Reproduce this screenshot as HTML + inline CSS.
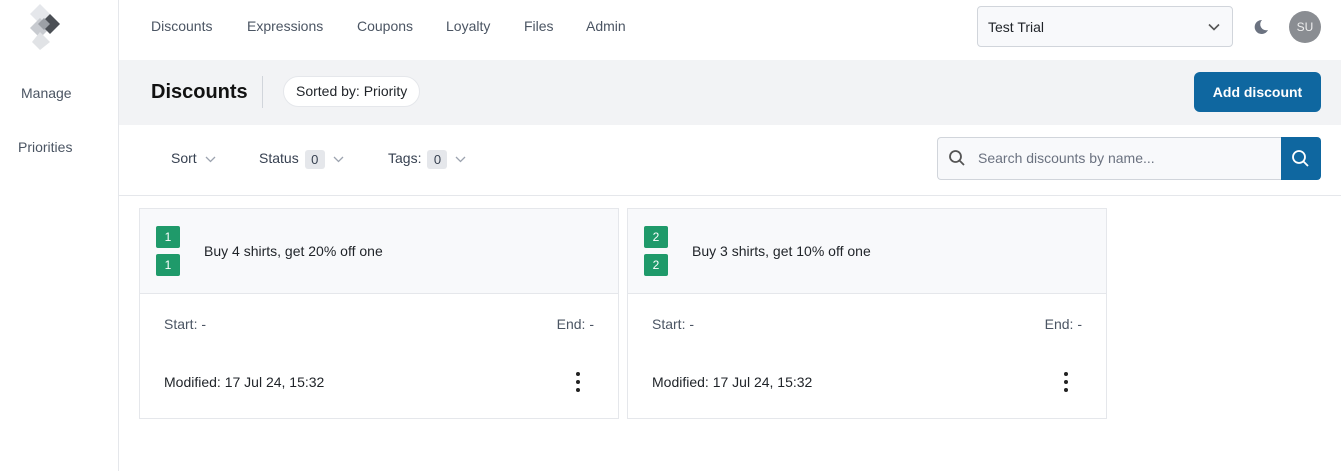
<!DOCTYPE html>
<html><head><meta charset="utf-8"><style>
*{box-sizing:border-box;margin:0;padding:0}
body{width:1341px;height:471px;background:#fff;font-family:"Liberation Sans",sans-serif;color:#1f2328;position:relative;overflow:hidden;font-size:14px}
.abs{position:absolute}
.side{left:0;top:0;width:119px;height:471px;border-right:1px solid #e5e7eb}
.nav a{position:absolute;top:18px;color:#4b5563;font-size:14px;text-decoration:none}
.hdr{left:119px;top:60px;width:1222px;height:65px;background:#f2f3f5}
.card{position:absolute;top:208px;width:480px;height:211px;border:1px solid #e5e7eb;background:#fff}
.card .top{height:85px;background:#f8f9fb;border-bottom:1px solid #e5e7eb;position:relative}
.badge{position:absolute;left:16px;width:24px;height:22px;background:#1f9a6a;color:#fff;font-size:12px;text-align:center;line-height:22px;border-radius:2px}
.cnt{display:inline-block;background:#e5e7eb;border-radius:3px;width:20px;height:19px;line-height:19px;text-align:center;font-size:13px;margin-left:6px;vertical-align:middle}
.chev{display:inline-block;margin-left:8px;vertical-align:middle}
</style></head><body>
<div class="abs side">
<svg class="abs" style="left:30px;top:4px" width="34" height="46" viewBox="0 0 34 46">
<polygon points="10,0 20,10 10,20 0,10" fill="#e5e7eb"/>
<polygon points="10,14 20,24 10,34 0,24" fill="#c8cbd0"/>
<polygon points="10,28 20,38 10,46 2,38" fill="#e1e3e6"/>
<polygon points="20,10 30,20 20,30 10,20" fill="#4b4f55"/>
<polygon points="14,14 20,20 14,26 8,20" fill="#9ca0a6"/>
</svg>
<div class="abs" style="left:21px;top:85px;color:#4b5563">Manage</div>
<div class="abs" style="left:18px;top:139px;color:#4b5563">Priorities</div>
</div>
<div class="nav">
<a style="left:151px">Discounts</a><a style="left:247px">Expressions</a><a style="left:357px">Coupons</a><a style="left:446px">Loyalty</a><a style="left:524px">Files</a><a style="left:586px">Admin</a>
</div>
<div class="abs" style="left:977px;top:6px;width:256px;height:41px;border:1px solid #d1d5db;border-radius:4px;background:#f8f9fb;padding:12px 10px;font-size:14px">Test Trial
<svg class="abs" style="right:12px;top:16px" width="12" height="8" viewBox="0 0 12 8"><path d="M1 1.5l5 5 5-5" stroke="#555" stroke-width="1.6" fill="none"/></svg></div>
<svg class="abs" style="left:1252px;top:18px" width="18" height="18" viewBox="0 0 18 18"><path d="M10 2a7 7 0 1 0 6 10A6 6 0 0 1 10 2z" fill="#6b7280"/></svg>
<div class="abs" style="left:1289px;top:11px;width:32px;height:32px;border-radius:50%;background:#8a8d92;color:#eee;font-size:12px;text-align:center;line-height:32px">SU</div>
<div class="abs hdr">
<div class="abs" style="left:32px;top:21px;font-size:20px;font-weight:bold;color:#111">Discounts</div>
<div class="abs" style="left:143px;top:16px;width:1px;height:32px;background:#d1d5db"></div>
<div class="abs" style="left:164px;top:16px;height:31px;padding:0 12px;border:1px solid #e5e7eb;border-radius:16px;background:#fff;line-height:29px;font-size:14px">Sorted by: Priority</div>
<div class="abs" style="left:1075px;top:12px;width:127px;height:40px;background:#0f67a0;border-radius:6px;color:#fff;font-weight:bold;text-align:center;line-height:40px">Add discount</div>
</div>
<div class="abs" style="left:171px;top:148px;color:#374151;line-height:20px">Sort<svg class="chev" width="11" height="7" viewBox="0 0 11 7"><path d="M1 1l4.5 4.5L10 1" stroke="#9ca3af" stroke-width="1.3" fill="none"/></svg></div>
<div class="abs" style="left:259px;top:148px;color:#374151;line-height:20px">Status<span class="cnt">0</span><svg class="chev" width="11" height="7" viewBox="0 0 11 7"><path d="M1 1l4.5 4.5L10 1" stroke="#9ca3af" stroke-width="1.3" fill="none"/></svg></div>
<div class="abs" style="left:388px;top:148px;color:#374151;line-height:20px">Tags:<span class="cnt">0</span><svg class="chev" width="11" height="7" viewBox="0 0 11 7"><path d="M1 1l4.5 4.5L10 1" stroke="#9ca3af" stroke-width="1.3" fill="none"/></svg></div>
<div class="abs" style="left:937px;top:137px;width:345px;height:43px;border:1px solid #d1d5db;border-right:none;border-radius:4px 0 0 4px;background:#f8f9fb;color:#6b7280;padding:12px 0 0 40px">Search discounts by name...</div>
<svg class="abs" style="left:948px;top:149px" width="18" height="18" viewBox="0 0 18 18"><circle cx="7.5" cy="7.5" r="5.5" stroke="#555" stroke-width="1.8" fill="none"/><path d="M11.5 11.5L16 16" stroke="#555" stroke-width="1.8"/></svg>
<div class="abs" style="left:1281px;top:137px;width:40px;height:43px;background:#0f67a0;border-radius:0 4px 4px 0"></div>
<svg class="abs" style="left:1291px;top:149px" width="20" height="20" viewBox="0 0 20 20"><circle cx="8" cy="8" r="6" stroke="#fff" stroke-width="1.8" fill="none"/><path d="M12.5 12.5L17 17" stroke="#fff" stroke-width="1.8"/></svg>
<div class="abs" style="left:119px;top:195px;width:1222px;height:1px;background:#e5e7eb"></div>

<div class="card" style="left:139px">
<div class="top"><div class="badge" style="top:17px">1</div><div class="badge" style="top:45px">1</div><div class="abs" style="left:64px;top:34px">Buy 4 shirts, get 20% off one</div></div>
<div class="abs" style="left:24px;top:107px;color:#4b5563">Start: -</div><div class="abs" style="right:24px;top:107px;color:#4b5563">End: -</div>
<div class="abs" style="left:24px;top:165px">Modified: 17 Jul 24, 15:32</div>
<svg class="abs" style="left:434px;top:161px" width="8" height="24"><circle cx="4" cy="4" r="2" fill="#222"/><circle cx="4" cy="12" r="2" fill="#222"/><circle cx="4" cy="20" r="2" fill="#222"/></svg>
</div>
<div class="card" style="left:627px">
<div class="top"><div class="badge" style="top:17px">2</div><div class="badge" style="top:45px">2</div><div class="abs" style="left:64px;top:34px">Buy 3 shirts, get 10% off one</div></div>
<div class="abs" style="left:24px;top:107px;color:#4b5563">Start: -</div><div class="abs" style="right:24px;top:107px;color:#4b5563">End: -</div>
<div class="abs" style="left:24px;top:165px">Modified: 17 Jul 24, 15:32</div>
<svg class="abs" style="left:434px;top:161px" width="8" height="24"><circle cx="4" cy="4" r="2" fill="#222"/><circle cx="4" cy="12" r="2" fill="#222"/><circle cx="4" cy="20" r="2" fill="#222"/></svg>
</div>
</body></html>
